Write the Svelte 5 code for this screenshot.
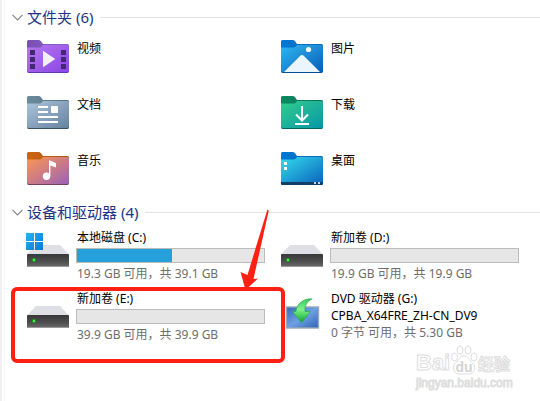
<script>
  const folders = [
    { name: '视频', icon: 'video', tab: ['#7a4fb5', '#8a63c4'], body: ['#b678f0', '#8a44e4'], edge: '#6b35b0' },
    { name: '图片', icon: 'picture', tab: ['#0078d4', '#0c66b8'], body: ['#2eb8f0', '#0a5cb8'], edge: '#0a4f9c' },
    { name: '文档', icon: 'document', tab: ['#6a8c9c', '#527080'], body: ['#aec4dc', '#64829f'], edge: '#3a5265' },
    { name: '下载', icon: 'download', tab: ['#0b8a60', '#087052'], body: ['#34cc8c', '#0797a8'], edge: '#066464' },
    { name: '音乐', icon: 'music', tab: ['#cf6510', '#a9541c'], body: ['#ff9650', '#9a62b8'], edge: '#74405c' },
    { name: '桌面', icon: 'desktop', tab: ['#0078d4', '#0c66b8'], body: ['#34dcec', '#0a62bc'], edge: '#0a4f9c' }
  ];

  const drives = [
    { name: '本地磁盘 (C:)', used: 51, system: true, info: '19.3 GB 可用，共 39.1 GB' },
    { name: '新加卷 (D:)', used: 0, info: '19.9 GB 可用，共 19.9 GB' },
    { name: '新加卷 (E:)', used: 0, marked: true, info: '39.9 GB 可用，共 39.9 GB' },
    { name: 'DVD 驱动器 (G:)', disc: 'CPBA_X64FRE_ZH-CN_DV9', info: '0 字节 可用，共 5.30 GB' }
  ];

  let foldersOpen = $state(true);
  let drivesOpen = $state(true);
</script>

{#snippet chevron()}
  <svg class="chevron" width="11" height="7" viewBox="0 0 11 7" fill="none" stroke="#858585" stroke-width="1.2"><path d="M0.5 0.8 L5.5 5.8 L10.5 0.8" /></svg>
{/snippet}

<main>
  <section>
    <h2>
      <button type="button" aria-expanded={foldersOpen} onclick={() => (foldersOpen = !foldersOpen)}>
        {@render chevron()}文件夹 ({folders.length})
      </button>
    </h2>
    {#if foldersOpen}
      <ul>
        {#each folders as folder}
          <li class="folder">
            <svg width="42" height="33" viewBox="0 0 42 33" aria-hidden="true">
              <defs>
                <linearGradient id="tab-{folder.icon}">
                  <stop offset="0" stop-color={folder.tab[0]} />
                  <stop offset="1" stop-color={folder.tab[1]} />
                </linearGradient>
                <linearGradient id="body-{folder.icon}" x2="1" y2="1">
                  <stop offset="0" stop-color={folder.body[0]} />
                  <stop offset="1" stop-color={folder.body[1]} />
                </linearGradient>
              </defs>
              <path d="M0 1.5Q0 0 1.5 0H11.5Q13 0 14 1.2L16 4H40.5Q42 4 42 5.5V10H0z" fill="url(#tab-{folder.icon})" />
              <path d="M0 8V31.3Q0 33 1.7 33H40.3Q42 33 42 31.3V8z" fill={folder.edge} />
              <path d="M0 7.5H12.5Q14 7.5 15 6.3L16 5H40.5Q42 5 42 6.5V30.5Q42 32 40.5 32H1.5Q0 32 0 30.5z" fill="url(#body-{folder.icon})" />
              {#if folder.icon === 'video'}
                <g fill="#432770">
                  <path d="M3 10h5v5h-5zM3 17h5v5h-5zM3 24h5v5h-5z" />
                  <path d="M34 10h5v5h-5zM34 17h5v5h-5zM34 24h5v5h-5z" />
                </g>
                <path d="M16 10.8L28.3 19L16 27.2z" fill="#f3f0f5" />
              {:else if folder.icon === 'picture'}
                <circle cx="27.5" cy="9.5" r="2.6" fill="#f6fbff" />
                <path d="M3 32L18.8 16.2Q21 14 23.2 16.2L39 32z" fill="#eaf5fe" />
              {:else if folder.icon === 'document'}
                <path d="M11 11h10M11 16h10M11 21h20M11 26h20" stroke="#fff" stroke-width="2" />
                <rect x="24" y="10" width="7" height="7" rx="1" fill="#fff" />
              {:else if folder.icon === 'download'}
                <path d="M21 10V24M15 18.5L21 24.5L27 18.5M14 28H28" fill="none" stroke="#fff" stroke-width="2" />
              {:else if folder.icon === 'music'}
                <circle cx="19.5" cy="24.3" r="3.7" fill="#fff" />
                <path d="M22 8.3Q22.5 8 29 11.2V15.5L23.4 13.4V24.5H22z" fill="#fff" />
              {:else}
                <path d="M3 10h3v3h-3zM3 15h3v3h-3z" fill="#fff" />
                <path d="M0 30h42v1.5q0 1.5-1.5 1.5h-39q-1.5 0-1.5-1.5z" fill="#123f66" />
                <path d="M33 30h2v2h-2zM37 30h2v2h-2z" fill="#c7d4e0" />
              {/if}
            </svg>
            <a href="#{folder.icon}">{folder.name}</a>
          </li>
        {/each}
      </ul>
    {/if}
  </section>

  <section>
    <h2>
      <button type="button" aria-expanded={drivesOpen} onclick={() => (drivesOpen = !drivesOpen)}>
        {@render chevron()}设备和驱动器 ({drives.length})
      </button>
    </h2>
    {#if drivesOpen}
      <ul class="drives">
        {#each drives as drive}
          <li class="drive">
            {#if drive.disc}
              <svg width="42" height="36" viewBox="0 0 42 36" aria-hidden="true">
                <defs>
                  <linearGradient id="screen" x2="1" y2="1">
                    <stop offset="0" stop-color="#3266b4" />
                    <stop offset="0.5" stop-color="#6ea0e4" />
                    <stop offset="1" stop-color="#2f62b2" />
                  </linearGradient>
                  <linearGradient id="copy" x2="0" y2="1">
                    <stop offset="0" stop-color="#3ccb62" />
                    <stop offset="0.45" stop-color="#7df08c" />
                    <stop offset="1" stop-color="#0ca528" />
                  </linearGradient>
                </defs>
                <rect x="5.5" y="13" width="32" height="21" fill="url(#screen)" stroke="#96a7b8" stroke-width="1.4" />
                <path d="M31 5C24 4 15.500 9 15 17.500H11.500L20.500 28.500L29.500 17.500H24C23.500 12 26 7.500 31 5z" fill="url(#copy)" stroke="#1fa43d" stroke-width="0.6" />
              </svg>
            {:else}
              <svg width="42" height="36" viewBox="0 0 42 36" aria-hidden="true">
                <defs>
                  <linearGradient id="front" x2="0" y2="1">
                    <stop offset="0" stop-color="#383838" />
                    <stop offset="0.6" stop-color="#505050" />
                    <stop offset="1" stop-color="#6c6c6c" />
                  </linearGradient>
                  <linearGradient id="windows" x2="1" y2="1">
                    <stop offset="0" stop-color="#2ab4ee" />
                    <stop offset="1" stop-color="#0678d4" />
                  </linearGradient>
                </defs>
                <path d="M9 12H33L42 21.5H0z" fill="#dfe0e5" />
                <rect y="21" width="42" height="13" rx="1" fill="url(#front)" />
                <path d="M0.5 33.5H41.5" stroke="#999" />
                <circle cx="7" cy="27" r="2.2" fill="#1c8a24" />
                <circle cx="7" cy="27" r="1.2" fill="#4cf04c" />
                {#if drive.system}
                  <path d="M-1 0h8v8h-8zM8 0h8v8h-8zM-1 9h8v8h-8zM8 9h8v8h-8z" fill="url(#windows)" />
                {/if}
              </svg>
            {/if}
            <div class="details">
              <a href="#drive">{drive.name}</a>
              {#if drive.disc}
                <span>{drive.disc}</span>
              {:else}
                <div class="bar" role="img" aria-label="已用 {drive.used}%">
                  <div class="used" style="width: {drive.used}%"></div>
                </div>
              {/if}
              <span class="info">{drive.info}</span>
            </div>
            {#if drive.marked}
              <div class="marker"></div>
              <svg class="arrow" width="30" height="82" viewBox="0 0 30 82" aria-hidden="true">
                <path d="M28.4 0.5L29.8 1.5L14.5 70L19 69.5L6.5 81L1.500 63L8.5 66z" fill="#ff2014" />
              </svg>
            {/if}
          </li>
        {/each}
      </ul>
    {/if}
  </section>

  <div class="watermark" aria-hidden="true">
    <svg width="28" height="30" viewBox="0 0 28 30">
      <g fill="#fff" stroke="#dedede">
        <ellipse cx="4.5" cy="12" rx="3" ry="4" />
        <ellipse cx="10" cy="5" rx="3" ry="4" />
        <ellipse cx="18" cy="5" rx="3" ry="4" />
        <ellipse cx="24" cy="12" rx="3" ry="4" />
        <path d="M14 11C18 11 19 15 22.5 18C26 21 25 29 19 29H9C3 29 2 21 5.5 18C9 15 10 11 14 11z" />
      </g>
      <text x="14" y="27" text-anchor="middle">du</text>
    </svg>
    <span class="brand">Bai</span>
    <span class="brand cjk">经验</span>
    <span class="site">jingyan.baidu.com</span>
  </div>
</main>

<style>
  :global(body) {
    margin: 0;
    background: #fff;
  }

  main {
    position: relative;
    box-sizing: border-box;
    min-height: 100vh;
    padding: 6px 0 0 7px;
    border-left: 2px solid #f0f0f0;
    box-shadow: inset 2px 0 #fff, inset 3px 0 #f5f5f5;
    overflow: hidden;
    color: #000;
    font: 12px/17px 'Noto Sans', 'Noto Sans CJK SC', sans-serif;
  }

  section {
    margin-bottom: 5px;
  }

  h2 {
    display: flex;
    align-items: center;
    gap: 7px;
    height: 22px;
    margin: 0;
    padding-left: 3px;
  }

  h2::after {
    content: '';
    flex: 1;
    height: 1px;
    background: #e2e2e2;
  }

  button {
    display: flex;
    align-items: center;
    gap: 4px;
    padding: 0;
    border: 0;
    background: none;
    color: #1e3287;
    font: 15px/22px 'Noto Sans', 'Noto Sans CJK SC', sans-serif;
    white-space: nowrap;
    cursor: pointer;
  }

  button[aria-expanded='false'] .chevron {
    transform: rotate(-90deg);
  }

  ul {
    display: grid;
    grid-template-columns: repeat(auto-fill, minmax(240px, 254px));
    margin: 0;
    padding: 0 0 0 18px;
    list-style: none;
  }

  .drives {
    padding-top: 5px;
  }

  li {
    position: relative;
    display: flex;
    align-items: flex-start;
    gap: 8px;
    box-sizing: border-box;
  }

  li > svg {
    flex: none;
    overflow: visible;
  }

  .folder {
    height: 56px;
    padding-top: 12px;
  }

  .drive {
    height: 61px;
    padding-top: 1px;
  }

  .drive > svg {
    margin-top: 4px;
  }

  a {
    color: inherit;
    text-decoration: none;
  }

  .details {
    display: flex;
    flex-direction: column;
    width: 189px;
    white-space: nowrap;
  }

  .bar {
    box-sizing: border-box;
    height: 15px;
    margin: 2px 1px 2px -1px;
    border: 1px solid #bcbcbc;
    background: #e6e6e6;
  }

  .used {
    height: 100%;
    background: #26a0da;
  }

  .info {
    color: #6d6d6d;
  }

  /* Red frame and arrow drawn over the highlighted drive */
  .marker {
    position: absolute;
    inset: -2px -4px -13px -16px;
    border: 4px solid #ff2014;
    border-radius: 6px;
    pointer-events: none;
  }

  .drive .arrow {
    position: absolute;
    top: -80px;
    left: 212px;
    margin: 0;
    pointer-events: none;
  }

  .watermark {
    position: absolute;
    right: 28px;
    bottom: 10px;
    display: grid;
    grid-template-columns: 34px 28px 34px;
    align-items: end;
    color: #fff;
    -webkit-text-stroke: 1px #dedede;
    pointer-events: none;
  }

  .watermark svg {
    grid-area: 1 / 2;
  }

  .watermark text {
    font: bold 14px 'Liberation Sans', sans-serif;
    fill: #d4d4d4;
    -webkit-text-stroke: 0;
  }

  .brand {
    grid-area: 1 / 1;
    font: bold 22px/24px 'Liberation Sans', sans-serif;
  }

  .cjk {
    grid-area: 1 / 3;
    font: bold 16px/24px 'Noto Sans CJK SC', sans-serif;
  }

  .site {
    grid-area: 2 / 1 / 3 / 4;
    font: 12px/16px 'Liberation Sans', sans-serif;
  }
</style>
